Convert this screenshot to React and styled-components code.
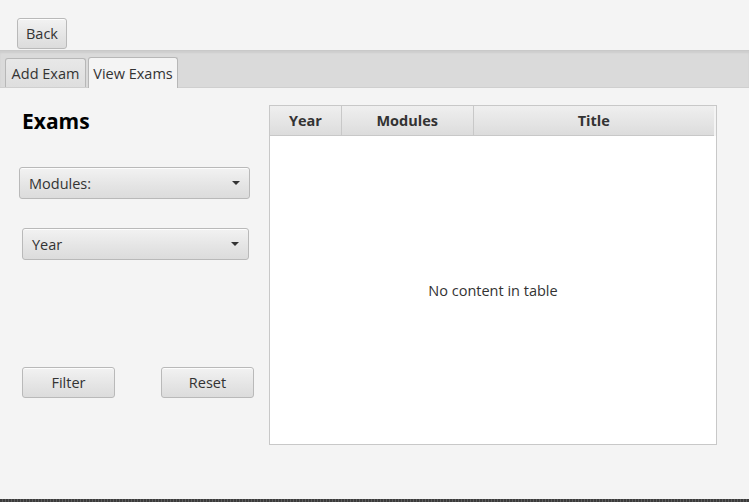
import React from "react";
import styled, { createGlobalStyle } from "styled-components";

const Global = createGlobalStyle`
  html, body { margin: 0; padding: 0; background: #f4f4f4; }
  * { box-sizing: border-box; }
`;

const Root = styled.div`
  width: 749px;
  height: 502px;
  display: flex;
  flex-direction: column;
  background: #f4f4f4;
  font-family: "Open Sans", "Noto Sans", sans-serif;
  font-size: 14.5px;
  color: #333;
  overflow: hidden;
`;

const TopBar = styled.div`
  height: 50px;
  padding: 18px 0 0 17px;
  display: flex;
  align-items: flex-start;
`;

const Button = styled.button`
  width: ${(p) => p.$w}px;
  height: ${(p) => p.$h || 31}px;
  margin-left: ${(p) => p.$ml || 0}px;
  padding: 0;
  font-family: inherit;
  font-size: 14.5px;
  color: #333;
  border: 1px solid #b9b9b9;
  border-radius: 3px;
  background: linear-gradient(to bottom, #f2f2f2 0%, #e4e4e4 60%, #dcdcdc 100%);
  box-shadow: inset 0 1px 0 rgba(255, 255, 255, 0.8);
  display: flex;
  align-items: center;
  justify-content: center;
`;

const TabHeader = styled.div`
  height: 38px;
  background: #dadada;
  border-top: 1px solid #c9c9c9;
  box-shadow: inset 0 2px 2px rgba(0, 0, 0, 0.06);
  display: flex;
  align-items: flex-end;
  padding-left: 5px;
  gap: 2px;
  border-bottom: 1px solid #cfcfcf;
`;

const Tab = styled.div`
  height: ${(p) => (p.$active ? 31 : 29)}px;
  width: ${(p) => p.$w}px;
  margin-bottom: ${(p) => (p.$active ? -1 : 0)}px;
  border: 1px solid #b7b7b7;
  border-bottom: none;
  border-radius: 3px 3px 0 0;
  background: ${(p) =>
    p.$active ? "#f4f4f4" : "linear-gradient(to bottom, #e8e8e8, #dedede)"};
  display: flex;
  align-items: center;
  justify-content: center;
  font-size: 14.5px;
  color: #333;
  padding-top: 1px;
`;

const Content = styled.div`
  flex: 1;
  display: flex;
`;

const LeftPane = styled.div`
  width: 269px;
  display: flex;
  flex-direction: column;
`;

const Heading = styled.h1`
  margin: 21px 0 0 22px;
  height: 24px;
  line-height: 24px;
  font-size: 21px;
  font-weight: 700;
  color: #000;
`;

const Combo = styled.div`
  margin: ${(p) => p.$mt}px 0 0 ${(p) => p.$ml}px;
  width: ${(p) => p.$w}px;
  height: 32px;
  border: 1px solid #b9b9b9;
  border-radius: 3px;
  background: linear-gradient(to bottom, #f2f2f2 0%, #e4e4e4 60%, #dcdcdc 100%);
  box-shadow: inset 0 1px 0 rgba(255, 255, 255, 0.8);
  display: flex;
  align-items: center;
  padding: 0 0 0 9px;
  color: #333;
`;

const ComboLabel = styled.span`
  flex: 1;
`;

const Arrow = styled.span`
  width: 0;
  height: 0;
  margin-right: 9px;
  border-left: 4px solid transparent;
  border-right: 4px solid transparent;
  border-top: 4px solid #333;
`;

const ButtonRow = styled.div`
  display: flex;
  margin: 107px 0 0 22px;
`;

const Table = styled.div`
  margin-top: 17px;
  width: 448px;
  height: 340px;
  border: 1px solid #c8c8c8;
  background: #fff;
  display: flex;
  flex-direction: column;
`;

const HeaderRow = styled.div`
  height: 30px;
  display: flex;
  padding-right: 2px;
  background: #f4f4f4;
`;

const HeaderCell = styled.div`
  width: ${(p) => p.$w}px;
  height: 30px;
  border-right: 1px solid #c8c8c8;
  border-bottom: 1px solid #c8c8c8;
  background: linear-gradient(to bottom, #efefef 0%, #e4e4e4 60%, #dcdcdc 100%);
  display: flex;
  align-items: center;
  justify-content: center;
  font-weight: 700;
  font-size: 14.5px;
  color: #333;
  &:last-child { border-right: none; }
`;

const Body = styled.div`
  flex: 1;
  display: flex;
  align-items: center;
  justify-content: center;
  color: #333;
`;

const BottomEdge = styled.div`
  height: 3px;
  background: repeating-linear-gradient(
    to right,
    #3c3c3c 0px,
    #3c3c3c 2px,
    #5a5a5a 2px,
    #5a5a5a 3px
  );
`;

export default function App() {
  return (
    <Root>
      <Global />
      <TopBar>
        <Button $w={50}>Back</Button>
      </TopBar>
      <TabHeader>
        <Tab $w={81}>Add Exam</Tab>
        <Tab $w={90} $active>
          View Exams
        </Tab>
      </TabHeader>
      <Content>
        <LeftPane>
          <Heading>Exams</Heading>
          <Combo $mt={34} $ml={19} $w={231}>
            <ComboLabel>Modules:</ComboLabel>
            <Arrow />
          </Combo>
          <Combo $mt={29} $ml={22} $w={227}>
            <ComboLabel>Year</ComboLabel>
            <Arrow />
          </Combo>
          <ButtonRow>
            <Button $w={93}>Filter</Button>
            <Button $w={93} $ml={46}>
              Reset
            </Button>
          </ButtonRow>
        </LeftPane>
        <Table>
          <HeaderRow>
            <HeaderCell $w={72}>Year</HeaderCell>
            <HeaderCell $w={132}>Modules</HeaderCell>
            <HeaderCell $w={241}>Title</HeaderCell>
          </HeaderRow>
          <Body>No content in table</Body>
        </Table>
      </Content>
      <BottomEdge />
    </Root>
  );
}
